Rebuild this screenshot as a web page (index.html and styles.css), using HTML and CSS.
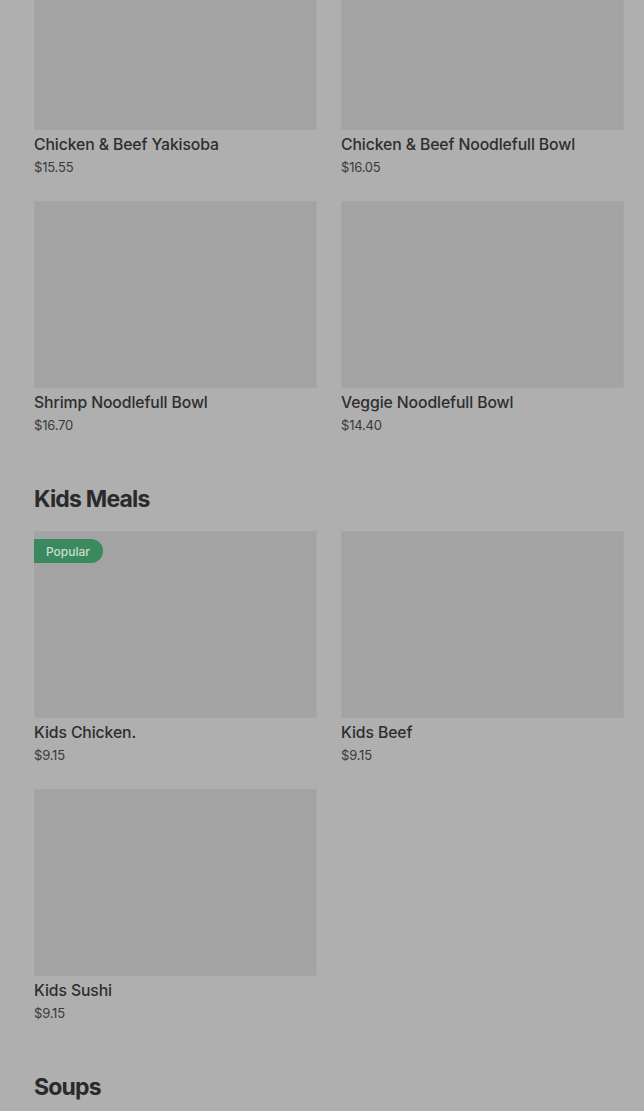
FILE: index.html
```html
<!DOCTYPE html>
<html>
<head>
<meta charset="utf-8">
<link rel="stylesheet" href="styles.css">
</head>
<body>
<main class="menu">
  <section class="section first">
    <div class="grid">
      <div class="card">
        <div class="thumb"></div>
        <div class="title">Chicken &amp; Beef Yakisoba</div>
        <div class="price">$15.55</div>
      </div>
      <div class="card">
        <div class="thumb"></div>
        <div class="title">Chicken &amp; Beef Noodlefull Bowl</div>
        <div class="price">$16.05</div>
      </div>
      <div class="card">
        <div class="thumb"></div>
        <div class="title">Shrimp Noodlefull Bowl</div>
        <div class="price">$16.70</div>
      </div>
      <div class="card">
        <div class="thumb"></div>
        <div class="title">Veggie Noodlefull Bowl</div>
        <div class="price">$14.40</div>
      </div>
    </div>
  </section>
  <section class="section">
    <h2 class="heading">Kids Meals</h2>
    <div class="grid">
      <div class="card">
        <div class="thumb"><span class="badge">Popular</span></div>
        <div class="title">Kids Chicken.</div>
        <div class="price">$9.15</div>
      </div>
      <div class="card">
        <div class="thumb"></div>
        <div class="title">Kids Beef</div>
        <div class="price">$9.15</div>
      </div>
      <div class="card">
        <div class="thumb"></div>
        <div class="title">Kids Sushi</div>
        <div class="price">$9.15</div>
      </div>
    </div>
  </section>
  <section class="section">
    <h2 class="heading">Soups</h2>
  </section>
</main>
</body>
</html>
```
FILE: styles.css
```css
html, body {
  margin: 0;
  padding: 0;
  background: #afafaf;
  height: 100%;
  overflow: hidden;
}
body {
  font-family: Inter, "Liberation Sans", sans-serif;
  color: #2b2b2b;
}
.menu {
  margin-top: -57px;
  padding: 0 20px 0 34px;
}
.section {
  padding-top: 48px;
}
.section.first {
  padding-top: 0;
}
.heading {
  margin: 0 0 16px;
  font-size: 23px;
  line-height: 32px;
  font-weight: 700;
  letter-spacing: -0.8px;
  color: #2a2a2a;
}
.grid {
  display: grid;
  grid-template-columns: 1fr 1fr;
  column-gap: 24px;
  row-gap: 24px;
}
.card {
  display: flex;
  flex-direction: column;
}
.thumb {
  position: relative;
  height: 187px;
  background: #a3a3a3;
  box-shadow: inset 0 0 0 1px #a6a6a6;
}
.title {
  margin-top: 5px;
  font-size: 15.75px;
  line-height: 20px;
  font-weight: 500;
  color: #2e2e2e;
  letter-spacing: -0.1px;
}
.price {
  margin-top: 2px;
  font-size: 13px;
  line-height: 20px;
  font-weight: 400;
  color: #3a3a3a;
  letter-spacing: -0.2px;
}
.badge {
  position: absolute;
  left: 0;
  top: 8px;
  height: 24px;
  padding: 0 13px 0 12px;
  display: flex;
  align-items: center;
  background: #3b8a5f;
  color: #c9ddd0;
  font-size: 12px;
  font-weight: 500;
  border-radius: 0 12px 12px 0;
}
```
